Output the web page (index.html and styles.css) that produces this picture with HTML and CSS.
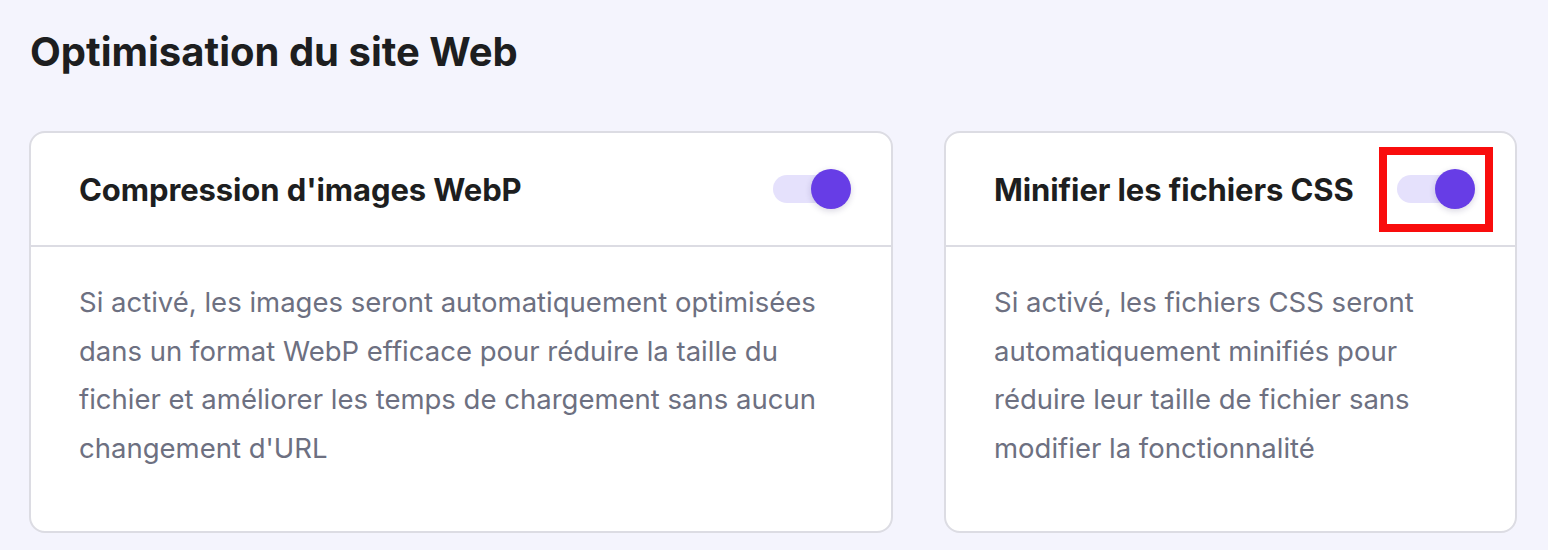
FILE: index.html
```html
<!DOCTYPE html>
<html lang="fr">
<head>
<meta charset="utf-8">
<title>Optimisation du site Web</title>
<link rel="stylesheet" href="styles.css">
</head>
<body>
<main class="page">
  <h1 class="page-title">Optimisation du site Web</h1>
  <div class="cards">
    <section class="card">
      <header class="card-head">
        <h2 class="card-title">Compression d'images WebP</h2>
        <span class="toggle"><span class="knob"></span></span>
      </header>
      <p class="card-body">Si activé, les images seront automatiquement optimisées dans un format WebP efficace pour réduire la taille du fichier et améliorer les temps de chargement sans aucun changement d'URL</p>
    </section>
    <section class="card">
      <header class="card-head">
        <h2 class="card-title">Minifier les fichiers CSS</h2>
        <span class="toggle highlighted"><span class="knob"></span></span>
      </header>
      <p class="card-body">Si activé, les fichiers CSS seront automatiquement minifiés pour réduire leur taille de fichier sans modifier la fonctionnalité</p>
    </section>
  </div>
</main>
</body>
</html>
```
FILE: styles.css
```css
html, body {
  margin: 0;
  padding: 0;
  background: #f4f4fd;
}
body {
  font-family: Inter, "Noto Sans", sans-serif;
  color: #1d1e20;
}
.page {
  padding: 26px 31px 0 29px;
}
.page-title {
  margin: 0 0 53px 1px;
  font-size: 40px;
  line-height: 52px;
  font-weight: 700;
  letter-spacing: 0;
  color: #1d1e20;
}
.cards {
  display: grid;
  grid-template-columns: 864fr 573fr;
  gap: 51px;
}
.card {
  background: #ffffff;
  border: 2px solid #dcdce3;
  border-radius: 16px;
  height: 402px;
  box-sizing: border-box;
}
.card-head {
  display: flex;
  align-items: center;
  justify-content: space-between;
  height: 112px;
  padding: 0 46px 0 48px;
  border-bottom: 2px solid #dcdce3;
}
.card-title {
  margin: 0;
  font-size: 31px;
  font-weight: 700;
  letter-spacing: -0.1px;
  color: #1d1e20;
}
.toggle {
  position: relative;
  flex: none;
  width: 72px;
  height: 28px;
  border-radius: 14px;
  background: #e5e1fc;
}
.knob {
  position: absolute;
  right: -6px;
  top: -6px;
  width: 40px;
  height: 40px;
  border-radius: 50%;
  background: #673de6;
  box-shadow: 0 2px 6px rgba(40, 30, 90, 0.18);
}
.toggle.highlighted::after {
  content: "";
  position: absolute;
  left: -18px;
  top: -28px;
  width: 114px;
  height: 85px;
  box-sizing: border-box;
  border: 8px solid #f90d0d;
}
.card-body {
  margin: 0;
  padding: 31px 48px 0 48px;
  font-size: 27.5px;
  line-height: 48.5px;
  color: #6d7081;
}
```
